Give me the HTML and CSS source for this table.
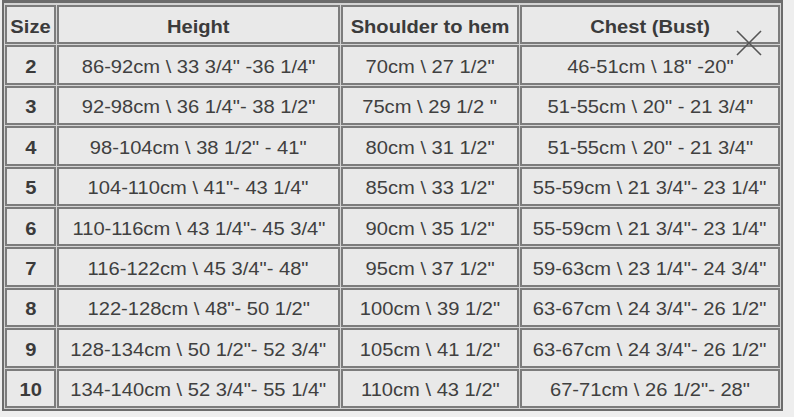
FILE: index.html
```html
<!DOCTYPE html>
<html>
<head>
<meta charset="utf-8">
<link rel="stylesheet" href="styles.css">
</head>
<body>
<div class="wrap">
<table class="chart">
<thead>
<tr><th class="c-size"><span>Size</span></th><th class="c-h"><span>Height</span></th><th class="c-s"><span>Shoulder to hem</span></th><th class="c-c"><span>Chest (Bust)</span></th></tr>
</thead>
<tbody>
<tr><td class="sz"><span>2</span></td><td><span>86-92cm \ 33 3/4" -36 1/4"</span></td><td><span>70cm \ 27 1/2"</span></td><td><span>46-51cm \ 18" -20"</span></td></tr>
<tr><td class="sz"><span>3</span></td><td><span>92-98cm \ 36 1/4"- 38 1/2"</span></td><td><span>75cm \ 29 1/2 "</span></td><td><span>51-55cm \ 20" - 21 3/4"</span></td></tr>
<tr><td class="sz"><span>4</span></td><td><span>98-104cm \ 38 1/2" - 41"</span></td><td><span>80cm \ 31 1/2"</span></td><td><span>51-55cm \ 20" - 21 3/4"</span></td></tr>
<tr><td class="sz"><span>5</span></td><td><span>104-110cm \ 41"- 43 1/4"</span></td><td><span>85cm \ 33 1/2"</span></td><td><span>55-59cm \ 21 3/4"- 23 1/4"</span></td></tr>
<tr><td class="sz"><span>6</span></td><td><span>110-116cm \ 43 1/4"- 45 3/4"</span></td><td><span>90cm \ 35 1/2"</span></td><td><span>55-59cm \ 21 3/4"- 23 1/4"</span></td></tr>
<tr><td class="sz"><span>7</span></td><td><span>116-122cm \ 45 3/4"- 48"</span></td><td><span>95cm \ 37 1/2"</span></td><td><span>59-63cm \ 23 1/4"- 24 3/4"</span></td></tr>
<tr><td class="sz"><span>8</span></td><td><span>122-128cm \ 48"- 50 1/2"</span></td><td><span>100cm \ 39 1/2"</span></td><td><span>63-67cm \ 24 3/4"- 26 1/2"</span></td></tr>
<tr><td class="sz"><span>9</span></td><td><span>128-134cm \ 50 1/2"- 52 3/4"</span></td><td><span>105cm \ 41 1/2"</span></td><td><span>63-67cm \ 24 3/4"- 26 1/2"</span></td></tr>
<tr><td class="sz"><span>10</span></td><td><span>134-140cm \ 52 3/4"- 55 1/4"</span></td><td><span>110cm \ 43 1/2"</span></td><td><span>67-71cm \ 26 1/2"- 28"</span></td></tr>
</tbody>
</table>
<svg class="close" width="26" height="26" viewBox="0 0 26 26" aria-label="close">
<path d="M1 1 L25 25 M25 1 L1 25" stroke="#555" stroke-width="1.6" fill="none"/>
</svg>
</div>
</body>
</html>
```

FILE: styles.css
```css
html, body {
  margin: 0;
  padding: 0;
  background: #eeeeee;
  width: 794px;
  height: 417px;
  overflow: hidden;
}

.wrap {
  position: relative;
  width: 794px;
  height: 417px;
}

.chart {
  margin-left: 2px;
  border-collapse: separate;
  border-spacing: 1px;
  border-style: solid;
  border-color: #6c6c6c;
  border-width: 3px 2px 2px 2px;
  padding-top: 1px;
  background: #d4d4d4;
  table-layout: fixed;
  font-family: "Liberation Sans", Arial, sans-serif;
  font-size: 17.5px;
  color: #404040;
}

.chart th,
.chart td {
  box-sizing: border-box;
  height: 39.4px;
  padding: 5px 0 0 0;
  border: 2px solid #7c7c7c;
  background: #e9e9e9;
  text-align: center;
  vertical-align: middle;
  white-space: nowrap;
  overflow: visible;
}

.chart th {
  font-weight: bold;
  color: #3b3b3b;
}

.chart span {
  display: inline-block;
  transform: scaleX(1.15);
  transform-origin: center;
}

.chart .sz {
  font-weight: bold;
  color: #3b3b3b;
}

.c-size { width: 51px; }
.c-h { width: 283px; }
.c-s { width: 178px; }
.c-c { width: 260px; }

.close {
  position: absolute;
  left: 736px;
  top: 30px;
}
```
